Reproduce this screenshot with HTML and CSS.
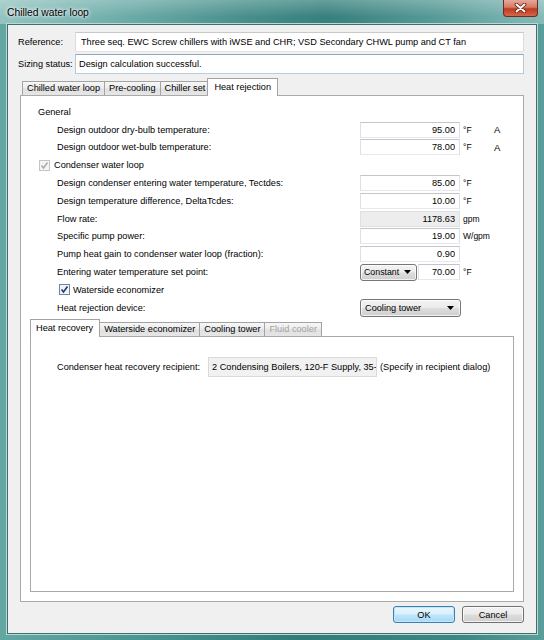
FILE: index.html
```html
<!DOCTYPE html>
<html lang="en">
<head>
    <meta charset="UTF-8">
    <meta name="viewport" content="width=device-width, initial-scale=1.0">
    <link rel="stylesheet" href="styles.css">
</head>
<body>
<div class="window">
    <div class="titlebar">
        <span class="title">Chilled water loop</span>
        <div class="close">
            <svg width="13" height="10" viewBox="0 0 13 10">
                <path d="M2.5 1.5 L10.5 8.5 M10.5 1.5 L2.5 8.5" stroke="#5a1a10" stroke-width="3.6" stroke-linecap="round"/>
                <path d="M2.5 1.5 L10.5 8.5 M10.5 1.5 L2.5 8.5" stroke="#fff" stroke-width="2" stroke-linecap="round"/>
            </svg>
        </div>
    </div>

    <div class="client">
        <div class="head-row">
            <label class="head-label">Reference:</label>
            <input class="textbox" type="text" value="Three seq. EWC Screw chillers with iWSE and CHR; VSD Secondary CHWL pump and CT fan">
        </div>
        <div class="head-row">
            <label class="head-label">Sizing status:</label>
            <input class="textbox focused" type="text" value="Design calculation successful.">
        </div>

        <div class="tabs main-tabs">
            <div class="tab">Chilled water loop</div>
            <div class="tab">Pre-cooling</div>
            <div class="tab">Chiller set</div>
            <div class="tab active">Heat rejection</div>
        </div>
        <div class="panel main-panel">
            <div class="rows">
                <div class="row"><span class="lbl">General</span></div>
                <div class="row">
                    <span class="lbl ind">Design outdoor dry-bulb temperature:</span>
                    <span class="fld"><input class="num" value="95.00"><span class="unit">°F</span><span class="flag">A</span></span>
                </div>
                <div class="row">
                    <span class="lbl ind">Design outdoor wet-bulb temperature:</span>
                    <span class="fld"><input class="num" value="78.00"><span class="unit">°F</span><span class="flag">A</span></span>
                </div>
                <div class="row">
                    <span class="lbl check-lbl">
                        <svg class="check" width="11" height="11" viewBox="0 0 11 11">
                            <rect x="0.5" y="0.5" width="10" height="10" fill="#f4f4f4" stroke="#c4c4c4"/>
                            <path d="M2.5 5.5 L4.5 8 L8.5 2.5" fill="none" stroke="#a8a8a8" stroke-width="1.4"/>
                        </svg>
                        <span>Condenser water loop</span>
                    </span>
                </div>
                <div class="row">
                    <span class="lbl ind">Design condenser entering water temperature, Tectdes:</span>
                    <span class="fld"><input class="num" value="85.00"><span class="unit">°F</span></span>
                </div>
                <div class="row">
                    <span class="lbl ind">Design temperature difference, DeltaTcdes:</span>
                    <span class="fld"><input class="num" value="10.00"><span class="unit">°F</span></span>
                </div>
                <div class="row">
                    <span class="lbl ind">Flow rate:</span>
                    <span class="fld"><input class="num readonly" value="1178.63" readonly><span class="unit">gpm</span></span>
                </div>
                <div class="row">
                    <span class="lbl ind">Specific pump power:</span>
                    <span class="fld"><input class="num" value="19.00"><span class="unit">W/gpm</span></span>
                </div>
                <div class="row">
                    <span class="lbl ind">Pump heat gain to condenser water loop (fraction):</span>
                    <span class="fld"><input class="num" value="0.90"></span>
                </div>
                <div class="row">
                    <span class="lbl ind">Entering water temperature set point:</span>
                    <span class="fld">
                        <span class="combo small">Constant<svg width="7" height="4" viewBox="0 0 7 4"><path d="M0 0h7L3.5 4z" fill="#000"/></svg></span>
                        <input class="num short" value="70.00"><span class="unit">°F</span>
                    </span>
                </div>
                <div class="row">
                    <span class="lbl ind check-lbl economizer">
                        <svg class="check" width="11" height="11" viewBox="0 0 11 11">
                            <rect x="0.5" y="0.5" width="10" height="10" fill="#eef3f8" stroke="#6f87a3"/>
                            <path d="M2.5 5.5 L4.5 8 L8.5 2.5" fill="none" stroke="#24386b" stroke-width="1.6"/>
                        </svg>
                        <span>Waterside economizer</span>
                    </span>
                </div>
                <div class="row">
                    <span class="lbl ind">Heat rejection device:</span>
                    <span class="fld">
                        <span class="combo wide">Cooling tower<svg width="7" height="4" viewBox="0 0 7 4"><path d="M0 0h7L3.5 4z" fill="#000"/></svg></span>
                    </span>
                </div>
            </div>

            <div class="tabs sub-tabs">
                <div class="tab active">Heat recovery</div>
                <div class="tab">Waterside economizer</div>
                <div class="tab">Cooling tower</div>
                <div class="tab disabled">Fluid cooler</div>
            </div>
            <div class="panel sub-panel">
                <div class="recipient-row">
                    <span class="recipient-lbl">Condenser heat recovery recipient:</span>
                    <span class="recipient">2 Condensing Boilers, 120-F Supply, 35-</span>
                    <span class="hint">(Specify in recipient dialog)</span>
                </div>
            </div>
        </div>

        <div class="buttons">
            <button type="button" class="btn default">OK</button>
            <button type="button" class="btn">Cancel</button>
        </div>
    </div>
</div>
</body>
</html>
```

FILE: styles.css
```css
* {
    box-sizing: border-box;
}
body {
    margin: 0;
    font-family: "Liberation Sans", Arial, sans-serif;
    font-size: 9.2px;
    color: #000;
}
/* window frame */
.window {
    width: 544px;
    height: 640px;
    background: linear-gradient(90deg, #63a7a3 0%, #4b9692 25%, #2f7c79 55%, #3d8884 85%, #5a9e9b 100%);
}
.titlebar {
    height: 24px;
    display: flex;
    justify-content: space-between;
    padding-left: 7px;
    background:
        linear-gradient(180deg, rgba(255,255,255,0.28), rgba(255,255,255,0.05) 70%),
        linear-gradient(90deg, #8ec1be 0%, #6eaeaa 18%, #3e8985 45%, #2c7976 60%, #4e9591 80%, #7fb7b4 100%);
}
.title {
    font-size: 10.3px;
    line-height: 25px;
    text-shadow: 0 0 5px #fff, 0 0 3px #fff;
}
.close {
    width: 35px;
    height: 17px;
    margin-right: 6px;
    border: 1px solid #6b2c22;
    border-top: none;
    border-radius: 0 0 4px 4px;
    background: linear-gradient(180deg, #e6a99b 0%, #d47a64 45%, #c0391f 55%, #d7664a 100%);
    display: flex;
    align-items: center;
    justify-content: center;
}
.client {
    margin: 0 7px;
    height: 610px;
    background: #f0f0f0;
    border: 1px solid #3f6f6d;
    box-shadow: 0 0 0 1px #bcd8d6;
    padding: 7px 12px 0 10px;
}
/* top fields */
.head-row {
    display: flex;
    align-items: center;
    height: 20px;
    margin-bottom: 2px;
}
.head-label {
    width: 57px;
}
.textbox {
    flex: 1;
    height: 20px;
    font: inherit;
    padding: 0 5px;
    background: #fff;
    border: 1px solid;
    border-color: #c9c9c9 #dcdcdc #e3e3e3 #dcdcdc;
    outline: none;
}
.textbox.focused {
    padding-left: 3px;
    border-color: #8fa7c0 #b3c8dc #b8cde0 #b3c8dc;
}
/* tabs */
.tabs {
    display: flex;
    align-items: flex-end;
    height: 17px;
}
.tab {
    height: 14px;
    line-height: 13px;
    padding: 0 4px;
    margin-right: -1px;
    border: 1px solid #a3a3a3;
    border-bottom: none;
    background: linear-gradient(180deg, #f7f7f7 0%, #ececec 45%, #e0e0e0 55%, #e6e6e6 100%);
    white-space: nowrap;
}
.tab.active {
    position: relative;
    z-index: 1;
    height: 18px;
    line-height: 17px;
    margin: 0 -1px -1px -2px;
    padding: 0 6px;
    background: #fff;
}
.tab.disabled {
    color: #a3a3a3;
}
.main-tabs {
    margin-top: 4px;
    margin-left: 2px;
    padding-left: 2px;
}
.panel {
    background: #fff;
    border: 1px solid #aaaaaa;
}
.main-panel {
    margin-left: 2px;
    height: 507px;
    padding-top: 7px;
}
.rows {
    padding-left: 17px;
}
.row {
    display: flex;
    align-items: center;
    height: 17.8px;
}
.lbl {
    flex: 1;
}
.ind {
    padding-left: 19px;
}
.check-lbl {
    display: flex;
    align-items: center;
    gap: 4px;
    padding-left: 1px;
}
.check-lbl.economizer {
    padding-left: 21px;
    gap: 3px;
}
.fld {
    width: 163px;
    display: flex;
    align-items: center;
}
.num {
    width: 100px;
    height: 16px;
    font: inherit;
    text-align: right;
    padding: 0 4px;
    background: #fff;
    border: 1px solid;
    border-color: #c3c5ca #dbdfe6 #e3e9ef #dbdfe6;
    outline: none;
}
.num.readonly {
    background: #ededed;
    border-color: #e0e0e0;
}
.num.short {
    width: 42px;
    margin-left: 1px;
}
.unit {
    width: 34px;
    padding-left: 3px;
    font-size: 8.5px;
}
.flag {
    font-size: 9.5px;
}
.combo {
    height: 17px;
    display: flex;
    align-items: center;
    justify-content: space-between;
    padding: 0 6px 0 4px;
    border: 1px solid #767676;
    border-radius: 3px;
    background: linear-gradient(180deg, #f3f3f3 0%, #ebebeb 48%, #dddddd 52%, #d0d0d0 100%);
    box-shadow: inset 0 0 0 1px rgba(255,255,255,0.7);
}
.combo.small {
    width: 57px;
    padding: 0 5px 0 3px;
    gap: 3px;
    font-size: 8.8px;
}
.combo.wide {
    width: 101px;
    height: 18px;
}
/* lower tab page */
.sub-tabs {
    margin: 2px 9px 0 9px;
    padding-left: 2px;
}
.sub-tabs .tab.active {
    padding: 0 6px 0 5px;
}
.sub-panel {
    margin: 0 9px;
    height: 256px;
    padding: 20px 0 0 26px;
}
.recipient-row {
    display: flex;
    align-items: center;
    height: 20px;
}
.recipient-lbl {
    width: 151px;
}
.recipient {
    width: 169px;
    height: 20px;
    line-height: 18px;
    padding: 0 3px;
    overflow: hidden;
    white-space: nowrap;
    background: #f1f1f1;
    border: 1px solid #dadada;
}
.hint {
    margin-left: 3px;
}
/* dialog buttons */
.buttons {
    display: flex;
    justify-content: flex-end;
    gap: 7px;
    margin-top: 4px;
}
.btn {
    width: 62px;
    height: 17px;
    padding: 0;
    font: inherit;
    color: #000;
    border: 1px solid #707070;
    border-radius: 3px;
    background: linear-gradient(180deg, #f2f2f2 0%, #ebebeb 48%, #dddddd 52%, #cfcfcf 100%);
    box-shadow: inset 0 0 0 1px rgba(255,255,255,0.75);
}
.btn.default {
    border-color: #3c7fb1;
    background: linear-gradient(180deg, #eaf6fd 0%, #d9f0fc 48%, #bee6fd 52%, #a7d9f5 100%);
    box-shadow: inset 0 0 0 1px #c4e6f7;
}
```
